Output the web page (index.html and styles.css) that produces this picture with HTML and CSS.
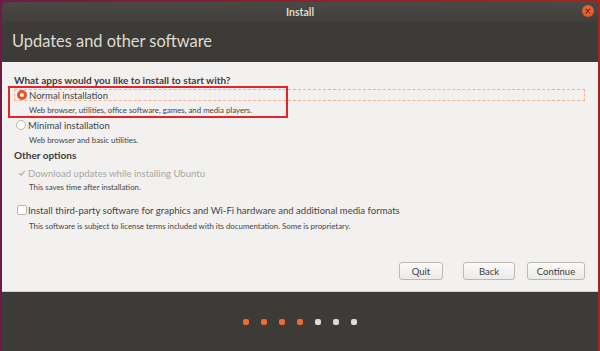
FILE: index.html
```html
<!DOCTYPE html>
<html>
<head>
<meta charset="utf-8">
<link rel="stylesheet" href="styles.css">
</head>
<body>
<div class="window">
  <div class="header">
    <div class="titlebar">
      <span class="title">Install</span>
      <span class="close"><svg width="12" height="12" viewBox="0 0 12 12"><path d="M4.2 4.2 L7.8 7.8 M7.8 4.2 L4.2 7.8" stroke="#5a2010" stroke-width="1.1" stroke-linecap="round"/></svg></span>
    </div>
    <h1 class="heading">Updates and other software</h1>
  </div>
  <div class="content">
    <div class="annot"></div>
    <div class="question">What apps would you like to install to start with?</div>
    <div class="opt focus">
      <span class="radio on"></span><span class="label">Normal installation</span>
    </div>
    <div class="desc d1">Web browser, utilities, office software, games, and media players.</div>
    <div class="opt m1">
      <span class="radio"></span><span class="label">Minimal installation</span>
    </div>
    <div class="desc d2">Web browser and basic utilities.</div>
    <div class="question q2">Other options</div>
    <div class="opt m2 disabled">
      <span class="check"><svg width="10" height="10" viewBox="0 0 10 10"><path d="M2.2 5.2 L4.2 7.2 L7.8 2.8" fill="none" stroke="#b0aea9" stroke-width="1.2"/></svg></span><span class="label">Download updates while installing Ubuntu</span>
    </div>
    <div class="desc d3">This saves time after installation.</div>
    <div class="opt m3">
      <span class="check box"></span><span class="label">Install third-party software for graphics and Wi-Fi hardware and additional media formats</span>
    </div>
    <div class="desc d4">This software is subject to license terms included with its documentation. Some is proprietary.</div>
    <div class="buttons">
      <button class="btn quit">Quit</button>
      <button class="btn back">Back</button>
      <button class="btn cont">Continue</button>
    </div>
  </div>
  <div class="footer">
    <span class="dot done"></span><span class="dot done"></span><span class="dot done"></span><span class="dot done"></span><span class="dot"></span><span class="dot"></span><span class="dot"></span>
  </div>
</div>
</body>
</html>
```

FILE: styles.css
```css
html, body {
  margin: 0;
  padding: 0;
  width: 600px;
  height: 351px;
  overflow: hidden;
}
body {
  background: linear-gradient(90deg, #6e1c45 0%, #8c2230 50%, #a3261c 100%);
  font-family: Lato, "Noto Sans", sans-serif;
  padding: 2px 2px 0 2px;
  box-sizing: border-box;
}
.window {
  width: 596px;
  height: 349px;
  display: flex;
  flex-direction: column;
  border-radius: 5px 5px 0 0;
  overflow: hidden;
  background: #3c3b37;
}
.header {
  height: 60px;
  background: #3c3b37;
  display: flex;
  flex-direction: column;
}
.titlebar {
  height: 20px;
  position: relative;
  display: flex;
  align-items: center;
  justify-content: center;
  background: linear-gradient(#4a4945, #403f3b);
}
.title {
  color: #dfdbd2;
  font-size: 10.5px;
  font-weight: bold;
}
.close {
  position: absolute;
  right: 4px;
  top: 3px;
  width: 12px;
  height: 12px;
  border-radius: 50%;
  background: radial-gradient(circle at 50% 40%, #f26b3a, #e0501c);
  display: flex;
}
.heading {
  margin: 0;
  padding: 9px 0 0 10px;
  font-size: 16.4px;
  font-weight: normal;
  color: #dfdbd2;
  line-height: 20px;
}
.content {
  position: relative;
  height: 230px;
  background: #f2f1f0;
  padding: 11px 13px 0 12px;
  box-sizing: border-box;
  display: flex;
  flex-direction: column;
  border-bottom: 1px solid #d8d6d2;
}
.annot {
  position: absolute;
  left: 6px;
  top: 24px;
  width: 280px;
  height: 32px;
  border: 2px solid #e0262a;
  box-sizing: border-box;
}
.question {
  font-size: 10px;
  font-weight: bold;
  color: #3c3c3c;
  line-height: 14px;
  height: 14px;
}
.q2 { margin-top: 1px; }
.opt {
  display: flex;
  align-items: center;
  height: 14px;
  font-size: 9.55px;
  color: #454545;
  padding-left: 2px;
  box-sizing: border-box;
}
.focus {
  border: 1px dashed #f4b194;
  height: 12px;
  margin-top: 2px;
}
.m1 { margin-top: 1px; }
.m2 { margin-top: 4px; }
.m3 { margin-top: 9px; }
.label { white-space: nowrap; }
.radio {
  width: 10px;
  height: 10px;
  border-radius: 50%;
  border: 1px solid #b9b7b2;
  background: #fff;
  box-sizing: border-box;
  margin-right: 2px;
  flex: none;
}
.radio.on {
  background: #fff;
  border: 3px solid #e95420;
}
.check {
  width: 10px;
  height: 10px;
  margin: 0 1px;
  flex: none;
  display: flex;
}
.check.box {
  border: 1px solid #b9b7b2;
  border-radius: 2px;
  background: #fff;
  box-sizing: border-box;
}
.disabled .label { color: #a9a7a2; }
.desc {
  font-size: 7.85px;
  color: #454545;
  line-height: 14px;
  height: 14px;
  padding-left: 15px;
  white-space: nowrap;
}
.d1 { margin-top: 2px; }
.d2 { margin-top: 1px; }
.d4 { margin-top: 2px; }
.buttons {
  margin-top: 29px;
  display: flex;
  justify-content: flex-end;
}
.btn {
  height: 18px;
  padding: 0;
  font-family: inherit;
  font-size: 9.5px;
  color: #3c3c3c;
  border: 1px solid #bcb9b3;
  border-radius: 3px;
  background: linear-gradient(#fbfaf9, #eceae7);
  box-sizing: border-box;
}
.quit { width: 44px; }
.back { width: 52px; margin-left: 20px; }
.cont { width: 58px; margin-left: 12px; }
.footer {
  flex: 1;
  background: #3c3b37;
  display: flex;
  justify-content: center;
  align-items: center;
  gap: 12px;
}
.dot {
  width: 6px;
  height: 6px;
  border-radius: 2px;
  background: #dcdbd8;
}
.dot.done { background: #ee6a36; }
```
